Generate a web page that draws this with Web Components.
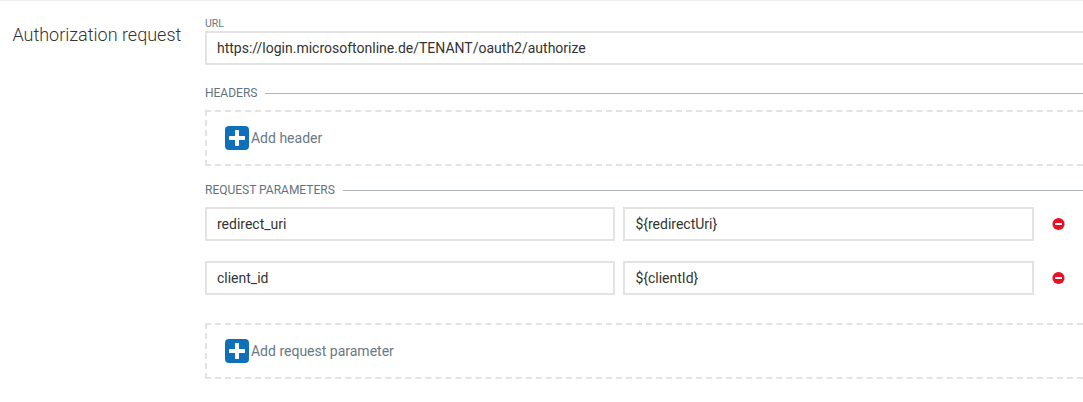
<!DOCTYPE html>
<html lang="en">
<head>
<meta charset="utf-8">
<title>Authorization request</title>
<style>
html,body{margin:0;background:#fff}
body{font-family:Roboto,sans-serif;width:1083px;height:402px;overflow:hidden}
</style>
</head>
<body>
<auth-form>
  <span slot="title">Authorization request</span>
  <form-label>URL</form-label>
  <text-box style="margin-bottom:18px">https://login.microsoftonline.de/TENANT/oauth2/authorize</text-box>
  <section-head>HEADERS</section-head>
  <add-box style="margin-bottom:14px">Add header</add-box>
  <section-head>REQUEST PARAMETERS</section-head>
  <param-row><text-box>redirect_uri</text-box><text-box slot="value">${redirectUri}</text-box></param-row>
  <param-row><text-box>client_id</text-box><text-box slot="value">${clientId}</text-box></param-row>
  <add-box style="margin-top:28px">Add request parameter</add-box>
</auth-form>
<script>
function define(name, html){
  const t = document.createElement('template');
  t.innerHTML = html;
  customElements.define(name, class extends HTMLElement{
    constructor(){
      super();
      this.attachShadow({mode:'open'}).append(t.content.cloneNode(true));
    }
  });
}
define('auth-form', `<style>
:host{display:grid;grid-template-columns:192.6px 888px;box-sizing:border-box;height:402px;padding-left:12.4px;border-top:1px solid #f0f0f0}
h2{margin:0;padding-top:21px;font-size:18px;line-height:26px;font-weight:300;color:#333;white-space:nowrap}
.fields{padding-top:15px;min-width:0}
</style><h2><slot name="title"></slot></h2><div class="fields"><slot></slot></div>`);
define('form-label', `<style>
:host{display:block;font-size:10.5px;line-height:15px;height:15px;color:#687885}
</style><slot></slot>`);
define('text-box', `<style>
:host{display:block;box-sizing:border-box;height:34px;border:2px solid #e3e3e3;padding:0 10px;font-size:14px;line-height:30px;color:#333;background:#fff;white-space:nowrap}
</style><slot></slot>`);
define('section-head', `<style>
:host{display:flex;gap:8px;height:27px;font-size:12px;line-height:20px;color:#5f737f;white-space:nowrap}
i{flex:1;height:1px;margin-top:10px;background:#b0b5b9}
</style><slot></slot><i></i>`);
define('add-box', `<style>
:host{display:flex;align-items:center;gap:2px;box-sizing:border-box;height:56px;padding-left:18px;border:2px dashed #e3e3e3;font-size:14px;line-height:20px;color:#687885}
svg{display:block}
</style><svg width="24" height="24" viewBox="0 0 24 24"><rect width="24" height="24" rx="4" fill="#0f70b9"/><path d="M10.500 4h3l.5.5V10h5.500l.5.5v3l-.5.5H14v5.500l-.5.5h-3l-.5-.5V14H4.500l-.5-.5v-3l.5-.5H10V4.500z" fill="#fff"/></svg><span><slot></slot></span>`);
define('param-row', `<style>
:host{display:grid;grid-template-columns:410.4px 410.4px 13px;column-gap:8px;align-items:center;margin-bottom:20px}
svg{display:block;margin-left:10px;overflow:visible}
</style><slot></slot><slot name="value"></slot><svg width="13" height="12" viewBox="0 0 13 12"><circle cx="6.500" cy="6" r="6.100" fill="#e81123"/><rect x="3" y="5" width="7" height="2" rx=".3" fill="#fff"/></svg>`);
</script>
</body>
</html>
